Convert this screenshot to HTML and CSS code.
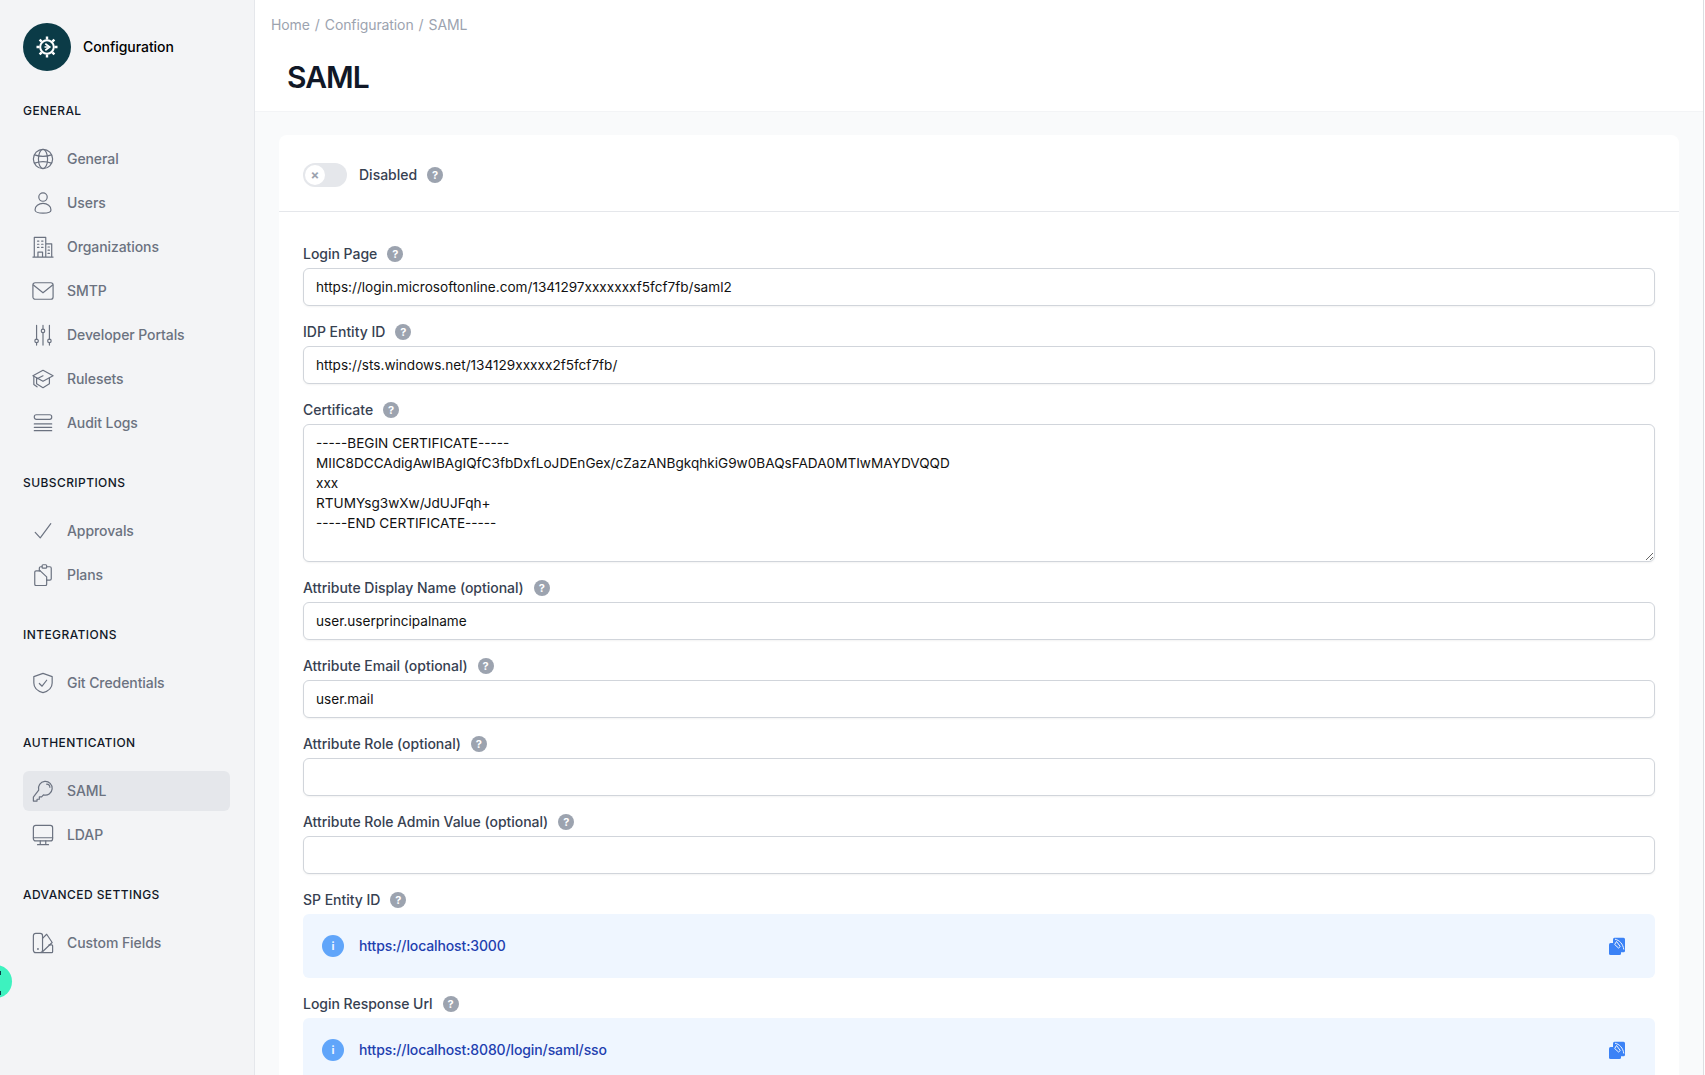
FILE: index.html
```html
<!DOCTYPE html>
<html lang="en">
<head>
    <meta charset="UTF-8">
    <meta name="viewport" content="width=device-width, initial-scale=1.0">
    <title>SAML</title>
    <link rel="stylesheet" href="styles.css">
</head>
<body>

    <div class="layout">
        <!-- Sidebar -->
        <aside class="sidebar">
            <div class="brand">
                <div class="brand-logo">
                    <svg viewBox="0 0 24 24" width="24" height="24" fill="none" stroke="#fff">
                        <circle cx="12" cy="12" r="6.8" stroke-width="2"/>
                        <path d="M12 1.500v3M12 19.500v3M1.500 12h3M19.500 12h3M4.600 4.600l2.100 2.100M17.300 17.300l2.100 2.100M4.600 19.400l2.100-2.100M17.300 6.700l2.100-2.100" stroke-width="2.400"/>
                        <path d="M10.300 8.800l4.400 3.200-4.400 3.200" stroke-width="1.700"/>
                        <path d="M9.500 12h3.500" stroke-width="1.500"/>
                    </svg>
                </div>
                <span>Configuration</span>
            </div>

            <h4 class="nav-title">General</h4>
            <nav class="nav-group">
                <a class="nav-item">
                    <svg class="nav-icon" viewBox="0 0 24 24"><circle cx="12" cy="12" r="10.500"/><ellipse cx="12" cy="12" rx="5" ry="10.500"/><path d="M2.800 7.500c5.500 2 12.900 2 18.400 0M2.800 16.500c5.500-2 12.900-2 18.400 0"/></svg>
                    General
                </a>
                <a class="nav-item">
                    <svg class="nav-icon" viewBox="0 0 24 24"><circle cx="12" cy="5.500" r="4.600"/><path d="M3.300 19.500c0-4 3.900-7 8.700-7s8.700 3 8.700 7c0 2-3.600 3.500-8.700 3.500s-8.700-1.500-8.700-3.500z"/></svg>
                    Users
                </a>
                <a class="nav-item">
                    <svg class="nav-icon" viewBox="0 0 24 24"><path d="M1 23h22M2.500 23V1.500h12.500V23M15 8.500h6.500V23M6.500 23v-5.500h5V23M6 5.500h1.500M10.500 5.500H12M6 9h1.500M10.500 9H12M6 12.500h1.500M10.500 12.500H12M17.500 12h1.500M17.500 15.500h1.500M17.500 19h1.500"/></svg>
                    Organizations
                </a>
                <a class="nav-item">
                    <svg class="nav-icon" viewBox="0 0 24 24"><rect x="1" y="3" width="22" height="18" rx="2.500"/><path d="M1.500 5.500L12 14l10.500-8.500"/></svg>
                    SMTP
                </a>
                <a class="nav-item">
                    <svg class="nav-icon" viewBox="0 0 24 24"><path d="M5 1.500v15M5 20.500V23M12 1.500V5.500M12 9.500V23M19 1.500v15M19 20.500V23"/><circle cx="5" cy="18.500" r="1.900"/><circle cx="12" cy="7.500" r="1.900"/><circle cx="19" cy="18.500" r="1.900"/></svg>
                    Developer Portals
                </a>
                <a class="nav-item">
                    <svg class="nav-icon" viewBox="0 0 24 24"><path d="M12 2.500L1 8.500 12 14.500l11-6L12 2.500z"/><path d="M5 10.700v6.500l7 4.300 7-4.300v-6.500"/><path d="M2 9.500v8.500M2 18l3.500 2.500M12 8.500l-7 3.500"/></svg>
                    Rulesets
                </a>
                <a class="nav-item">
                    <svg class="nav-icon" viewBox="0 0 24 24"><rect x="2.500" y="3" width="19" height="5" rx="2.200"/><path d="M2.500 13h19M2.500 16.700h19M2.500 20.400h19"/></svg>
                    Audit Logs
                </a>
            </nav>

            <h4 class="nav-title">Subscriptions</h4>
            <nav class="nav-group">
                <a class="nav-item">
                    <svg class="nav-icon" viewBox="0 0 24 24"><path d="M3.500 13.500l5.500 6L20.500 4"/></svg>
                    Approvals
                </a>
                <a class="nav-item">
                    <svg class="nav-icon" viewBox="0 0 24 24"><path d="M9 7.500H4.500A1.500 1.500 0 003 9v13a1.500 1.500 0 001.500 1.500h10A1.500 1.500 0 0016 22v-4.500"/><path d="M8 7.500V4.500A1.500 1.500 0 019.500 3H11M16 3h3.500A1.500 1.500 0 0121 4.500v11.500a1.500 1.500 0 01-1.500 1.500H16"/><rect x="11" y=".8" width="5" height="3.700" rx="1"/><path d="M9 7.500l7 6.500v3.500"/></svg>
                    Plans
                </a>
            </nav>

            <h4 class="nav-title">Integrations</h4>
            <nav class="nav-group">
                <a class="nav-item">
                    <svg class="nav-icon" viewBox="0 0 24 24"><path d="M12 1.500l10 3.500v7c0 5.200-4 8.800-10 10.500C6 20.800 2 17.200 2 12V5l10-3.500z"/><path d="M8 12.500l3 3 5-6.500"/></svg>
                    Git Credentials
                </a>
            </nav>

            <h4 class="nav-title">Authentication</h4>
            <nav class="nav-group">
                <a class="nav-item active">
                    <svg class="nav-icon" viewBox="0 0 24 24"><path d="M7.300 11A7.500 7.500 0 1112.500 16.200L10.500 18.500H8V21H5.500v2H1.500v-4.300z"/><path d="M16 4.500A3.500 3.500 0 0119.500 8"/></svg>
                    SAML
                </a>
                <a class="nav-item">
                    <svg class="nav-icon" viewBox="0 0 24 24"><rect x="1.500" y="1.500" width="21" height="17" rx="2.500"/><path d="M1.500 15h21M9 18.500V22M15 18.500V22M6 22.500h12"/></svg>
                    LDAP
                </a>
            </nav>

            <h4 class="nav-title">Advanced Settings</h4>
            <nav class="nav-group">
                <a class="nav-item">
                    <svg class="nav-icon" viewBox="0 0 24 24"><rect x="1.500" y="1.500" width="10" height="21" rx="2.500"/><path d="M11.500 7l4.500-4.500 6 9-10 9.500"/><path d="M10 22.500h11.500a1 1 0 001-1V15a1 1 0 00-1-1h-3"/><circle cx="6.500" cy="18.500" r=".4"/></svg>
                    Custom Fields
                </a>
            </nav>
            <div class="float-dot"></div>
        </aside>

        <!-- Main -->
        <main class="main">
            <header class="page-header">
                <div class="breadcrumb">Home<i>/</i>Configuration<i>/</i>SAML</div>
                <h1>SAML</h1>
            </header>

            <div class="content">
                <div class="card">
                    <div class="card-top">
                        <div class="toggle"><span class="knob">&times;</span></div>
                        <span class="toggle-label">Disabled</span>
                        <span class="help">?</span>
                    </div>

                    <div class="card-body">
                        <div class="field">
                            <label>Login Page <span class="help">?</span></label>
                            <input type="text" value="https://login.microsoftonline.com/1341297xxxxxxxf5fcf7fb/saml2">
                        </div>
                        <div class="field">
                            <label>IDP Entity ID <span class="help">?</span></label>
                            <input type="text" value="https://sts.windows.net/134129xxxxx2f5fcf7fb/">
                        </div>
                        <div class="field">
                            <label>Certificate <span class="help">?</span></label>
                            <textarea>-----BEGIN CERTIFICATE-----
MIIC8DCCAdigAwIBAgIQfC3fbDxfLoJDEnGex/cZazANBgkqhkiG9w0BAQsFADA0MTIwMAYDVQQD
xxx
RTUMYsg3wXw/JdUJFqh+
-----END CERTIFICATE-----</textarea>
                        </div>
                        <div class="field">
                            <label>Attribute Display Name (optional) <span class="help">?</span></label>
                            <input type="text" value="user.userprincipalname">
                        </div>
                        <div class="field">
                            <label>Attribute Email (optional) <span class="help">?</span></label>
                            <input type="text" value="user.mail">
                        </div>
                        <div class="field">
                            <label>Attribute Role (optional) <span class="help">?</span></label>
                            <input type="text">
                        </div>
                        <div class="field">
                            <label>Attribute Role Admin Value (optional) <span class="help">?</span></label>
                            <input type="text">
                        </div>
                        <div class="field">
                            <label>SP Entity ID <span class="help">?</span></label>
                            <div class="info-box">
                                <span class="info-icon">i</span>
                                <span class="info-text">https://localhost:3000</span>
                                <svg class="copy-icon" viewBox="0 0 16 18"><rect x="4" y=".8" width="12" height="14.500" rx="1.500"/><rect x="0" y="6" width="12" height="12" rx="1.500"/><path class="copy-cut" d="M6 2.200c4.500 1 8 4.800 8.800 10.300M7.500 4.500l-1.800 3 3.800 3.500 1.800-1.500z"/></svg>
                            </div>
                        </div>
                        <div class="field">
                            <label>Login Response Url <span class="help">?</span></label>
                            <div class="info-box">
                                <span class="info-icon">i</span>
                                <span class="info-text">https://localhost:8080/login/saml/sso</span>
                                <svg class="copy-icon" viewBox="0 0 16 18"><rect x="4" y=".8" width="12" height="14.500" rx="1.500"/><rect x="0" y="6" width="12" height="12" rx="1.500"/><path class="copy-cut" d="M6 2.200c4.500 1 8 4.800 8.800 10.300M7.500 4.500l-1.800 3 3.800 3.500 1.800-1.500z"/></svg>
                            </div>
                        </div>
                    </div>
                </div>
            </div>
        </main>
    </div>

</body>
</html>
```

FILE: styles.css
```css
* {
    box-sizing: border-box;
}
html, body {
    height: 100%;
}
body {
    font-family: Inter, "Noto Sans", sans-serif;
    font-size: 14px;
    line-height: 20px;
    background-color: #fff;
    margin: 0;
    padding: 0;
    overflow: hidden;
}
.layout {
    display: flex;
    height: 1075px;
    padding-right: 1px;
    overflow: hidden;
}

/* sidebar */
.sidebar {
    position: relative;
    width: 255px;
    flex-shrink: 0;
    height: 100%;
    padding: 23px 24px 0 23px;
    background-color: #f3f4f6;
    border-right: 1px solid #e5e7eb;
}
.brand {
    display: flex;
    align-items: center;
    gap: 12px;
    font-weight: 500;
    letter-spacing: -0.06px;
    color: #000;
}
.brand-logo {
    width: 48px;
    height: 48px;
    border-radius: 50%;
    background-color: #0b3b47;
    display: flex;
    align-items: center;
    justify-content: center;
}
.nav-title {
    margin: 30px 0 0;
    font-size: 12px;
    line-height: 20px;
    font-weight: 500;
    letter-spacing: 0.42px;
    text-transform: uppercase;
    color: #111827;
}
.nav-group {
    margin-top: 18px;
    display: flex;
    flex-direction: column;
    gap: 4px;
}
.nav-group + .nav-title {
    margin-top: 30px;
}
.nav-item {
    display: flex;
    align-items: center;
    gap: 12px;
    height: 40px;
    padding-left: 8px;
    border-radius: 6px;
    font-weight: 500;
    letter-spacing: -0.08px;
    color: #6b7280;
}
.nav-item.active {
    background-color: #e5e7eb;
}
.nav-icon {
    width: 24px;
    height: 24px;
    flex-shrink: 0;
    padding: 1px;
    fill: none;
    stroke: #6b7280;
    stroke-width: 1.300;
    stroke-linecap: round;
    stroke-linejoin: round;
}
.float-dot {
    position: absolute;
    left: -20px;
    top: 965px;
    width: 32px;
    height: 33px;
    border-radius: 50%;
    background-color: #3df2bf;
}
.float-dot::before,
.float-dot::after {
    content: "";
    position: absolute;
    left: 20px;
    width: 1px;
    height: 4px;
    background-color: #0b3b47;
}
.float-dot::before {
    top: 6px;
}
.float-dot::after {
    top: 26px;
}

/* main */
.main {
    flex: 1;
    min-width: 0;
    background-color: #f9fafb;
    border-right: 1px solid #dcdee2;
}
.page-header {
    height: 112px;
    padding: 15px 16px 0;
    background-color: #fff;
    border-bottom: 1px solid #f3f4f6;
}
.breadcrumb {
    color: #9ca3af;
    letter-spacing: -0.1px;
}
.breadcrumb i {
    font-style: normal;
    margin: 0 5px;
}
.page-header h1 {
    margin: 22px 0 0 16px;
    font-size: 30px;
    line-height: 40px;
    font-weight: 600;
    letter-spacing: -1px;
    color: #111827;
}
.content {
    padding: 23px 24px 0 24px;
}
.card {
    background-color: #fff;
    border-radius: 8px;
}
.card-top {
    display: flex;
    align-items: center;
    height: 77px;
    padding: 3px 0 0 24px;
    border-bottom: 1px solid #e5e7eb;
    font-weight: 500;
    color: #374151;
}
.toggle {
    width: 44px;
    height: 24px;
    border-radius: 12px;
    background-color: #e5e7eb;
    padding: 2px;
}
.knob {
    display: flex;
    align-items: center;
    justify-content: center;
    width: 20px;
    height: 20px;
    border-radius: 50%;
    background-color: #fff;
    font-size: 13px;
    font-weight: 700;
    color: #9ca3af;
}
.toggle-label {
    margin: 0 10px 0 12px;
}
.help {
    display: inline-flex;
    align-items: center;
    justify-content: center;
    width: 16px;
    height: 16px;
    border-radius: 50%;
    background-color: #9ca3af;
    color: #fff;
    font-size: 11px;
    font-weight: 700;
    line-height: 16px;
}
.card-body {
    padding: 32px 24px 0;
}
.field {
    margin-bottom: 16px;
}
.field label {
    display: flex;
    align-items: center;
    gap: 10px;
    height: 20px;
    margin-bottom: 4px;
    font-weight: 500;
    letter-spacing: -0.02px;
    color: #374151;
}
input, textarea {
    display: block;
    width: 100%;
    padding: 8px 12px;
    border: 1px solid #d1d5db;
    border-radius: 6px;
    background-color: #fff;
    font-family: inherit;
    font-size: 13.6px;
    line-height: 20px;
    color: #111;
    box-shadow: 0 1px 2px rgba(0, 0, 0, 0.05);
}
input {
    height: 38px;
}
textarea {
    height: 138px;
    resize: vertical;
}
.info-box {
    display: flex;
    align-items: center;
    height: 64px;
    padding: 0 30px 0 19px;
    border-radius: 6px;
    background-color: #eff6ff;
}
.info-icon {
    display: flex;
    align-items: center;
    justify-content: center;
    width: 22px;
    height: 22px;
    border-radius: 50%;
    background-color: #60a5fa;
    color: #eff6ff;
    font-size: 11px;
    font-weight: 700;
}
.info-text {
    flex: 1;
    margin-left: 15px;
    font-weight: 500;
    letter-spacing: -0.12px;
    color: #1e40af;
}
.copy-icon {
    width: 16px;
    height: 18px;
    fill: #3b82f6;
}
.copy-cut {
    fill: none;
    stroke: #eff6ff;
    stroke-width: 1;
}
```
